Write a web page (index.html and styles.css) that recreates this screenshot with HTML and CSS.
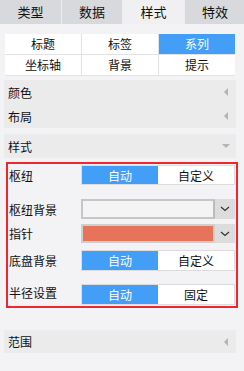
FILE: index.html
```html
<!DOCTYPE html>
<html lang="zh">
<head>
    <meta charset="UTF-8">
    <title>样式</title>
    <link rel="stylesheet" href="styles.css">
</head>
<body>
    <div class="tabs">
        <div class="tab">类型</div>
        <div class="tab">数据</div>
        <div class="tab active">样式</div>
        <div class="tab">特效</div>
    </div>

    <div class="sub-menu">
        <div class="sub-item">标题</div>
        <div class="sub-item">标签</div>
        <div class="sub-item selected">系列</div>
        <div class="sub-item">坐标轴</div>
        <div class="sub-item">背景</div>
        <div class="sub-item">提示</div>
    </div>

    <div class="group">
        <div class="group-row">颜色<span class="arrow-left"></span></div>
        <div class="group-row">布局<span class="arrow-left"></span></div>
    </div>

    <div class="group group-style">
        <div class="group-row">样式<span class="arrow-down"></span></div>
    </div>

    <div class="style-box">
        <div class="field field-hub">
            <div class="field-label">枢纽</div>
            <div class="switch">
                <div class="switch-opt on">自动</div>
                <div class="switch-opt">自定义</div>
            </div>
        </div>
        <div class="field field-hub-bg">
            <div class="field-label">枢纽背景</div>
            <div class="picker">
                <div class="picker-box"></div>
                <div class="picker-btn"><svg width="10" height="6" viewBox="0 0 10 6"><path d="M1 1l4 3.5L9 1" fill="none" stroke="#333" stroke-width="1.2"/></svg></div>
            </div>
        </div>
        <div class="field field-needle">
            <div class="field-label">指针</div>
            <div class="picker">
                <div class="picker-box orange"></div>
                <div class="picker-btn"><svg width="10" height="6" viewBox="0 0 10 6"><path d="M1 1l4 3.5L9 1" fill="none" stroke="#333" stroke-width="1.2"/></svg></div>
            </div>
        </div>
        <div class="field field-dial">
            <div class="field-label">底盘背景</div>
            <div class="switch">
                <div class="switch-opt on">自动</div>
                <div class="switch-opt">自定义</div>
            </div>
        </div>
        <div class="field field-radius">
            <div class="field-label label-top">半径设置</div>
            <div class="switch">
                <div class="switch-opt on">自动</div>
                <div class="switch-opt">固定</div>
            </div>
        </div>
    </div>

    <div class="group group-range">
        <div class="group-row">范围<span class="arrow-left"></span></div>
    </div>
</body>
</html>
```

FILE: styles.css
```css
body {
    margin: 0;
    width: 244px;
    height: 371px;
    background-color: #f3f3f5;
    font-family: "Noto Sans CJK SC", "Noto Sans", sans-serif;
    font-size: 12px;
    color: #111;
}
.tabs {
    display: grid;
    grid-template-columns: 61px 60px 61px 60px;
    gap: 1px;
    height: 24px;
    background-color: #eeeef0;
}
.tab {
    background-color: #d8d9dc;
    font-size: 13px;
    line-height: 24px;
    text-align: center;
}
.tab.active {
    background-color: #f0f0f2;
}
.sub-menu {
    display: grid;
    grid-template-columns: 76px 76px 76px;
    grid-auto-rows: 20px;
    gap: 1px;
    margin: 10px 0 0 5px;
    width: 230px;
    padding: 0 0 1px;
    background-color: #e2e2e4;
}
.sub-item {
    background-color: #fff;
    line-height: 20px;
    text-align: center;
}
.sub-item.selected {
    background-color: #439ef8;
    color: #fff;
}
.group {
    margin: 4px 0 0 4px;
    width: 232px;
    background-color: #ebebeb;
}
.group-row {
    display: flex;
    justify-content: space-between;
    align-items: center;
    height: 24px;
    padding: 0 8px 0 4px;
}
.group-style {
    margin-top: 6px;
}
.group-range {
    margin-top: 22px;
    height: 23px;
}
.group-range .group-row {
    height: 23px;
}
.arrow-left {
    width: 0;
    height: 0;
    border-top: 4px solid transparent;
    border-bottom: 4px solid transparent;
    border-right: 4px solid #b4b4b4;
}
.arrow-down {
    width: 0;
    height: 0;
    margin-right: -2px;
    border-left: 4px solid transparent;
    border-right: 4px solid transparent;
    border-top: 4px solid #b4b4b4;
}
.style-box {
    margin: 4px 0 0 6px;
    width: 227px;
    height: 142px;
    border: 2px solid #f0262e;
    padding-left: 1px;
}
.field {
    display: flex;
    align-items: center;
}
.field-label {
    width: 72px;
}
.label-top {
    align-self: flex-start;
    margin-top: 0;
}
.field-hub {
    margin-top: 1px;
    height: 20px;
}
.field-hub-bg {
    margin-top: 14px;
    height: 20px;
}
.field-needle {
    margin-top: 5px;
    height: 19px;
}
.field-dial {
    margin-top: 7px;
    height: 21px;
}
.field-radius {
    margin-top: 13px;
    height: 21px;
}
.switch {
    display: flex;
    width: 154px;
    height: 100%;
    box-sizing: border-box;
    border: 1px solid #dcdcdc;
    background-color: #fff;
}
.switch-opt {
    flex: 1;
    display: flex;
    align-items: center;
    justify-content: center;
}
.switch-opt.on {
    background-color: #439ef8;
    color: #fff;
}
.picker {
    display: flex;
    width: 154px;
    height: 100%;
}
.picker-box {
    flex: 1;
    box-sizing: border-box;
    border: 2px solid #c6c6c6;
    border-right-color: #bcbcbc;
    background-color: #f4f4f5;
}
.picker-box.orange {
    background-color: #e6735a;
    border-color: #cfcfcf;
}
.picker-btn {
    display: flex;
    align-items: center;
    justify-content: center;
    width: 20px;
    background-color: #dcdcdc;
}
```
